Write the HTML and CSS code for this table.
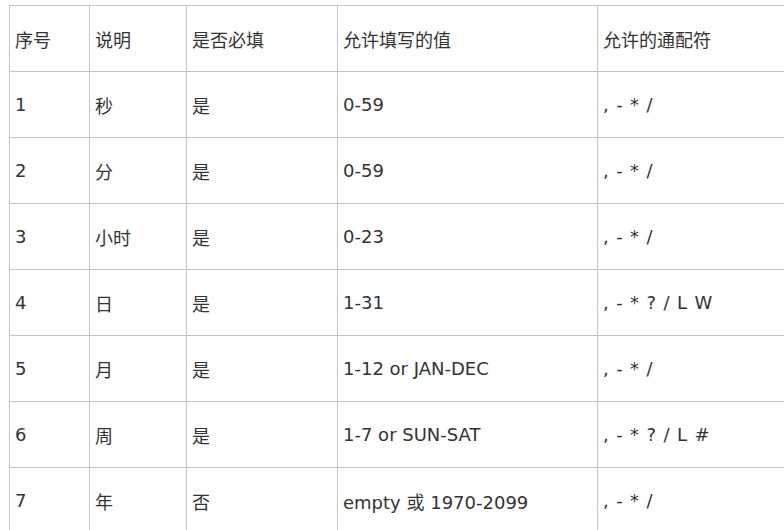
FILE: index.html
```html
<!DOCTYPE html>
<html lang="zh-CN">
<head>
<meta charset="utf-8">
<title>Cron 表达式字段</title>
<link rel="stylesheet" href="styles.css">
</head>
<body>
<table class="cron-table">
  <colgroup>
    <col class="c1"><col class="c2"><col class="c3"><col class="c4"><col class="c5">
  </colgroup>
  <tr><td>序号</td><td>说明</td><td>是否必填</td><td>允许填写的值</td><td>允许的通配符</td></tr>
  <tr><td>1</td><td>秒</td><td>是</td><td>0-59</td><td class="wild">, - * /</td></tr>
  <tr><td>2</td><td>分</td><td>是</td><td>0-59</td><td class="wild">, - * /</td></tr>
  <tr><td>3</td><td>小时</td><td>是</td><td>0-23</td><td class="wild">, - * /</td></tr>
  <tr><td>4</td><td>日</td><td>是</td><td>1-31</td><td class="wild">, - * ? / L W</td></tr>
  <tr><td>5</td><td>月</td><td>是</td><td>1-12 or JAN-DEC</td><td class="wild">, - * /</td></tr>
  <tr><td>6</td><td>周</td><td>是</td><td>1-7 or SUN-SAT</td><td class="wild">, - * ? / L #</td></tr>
  <tr><td>7</td><td>年</td><td>否</td><td>empty 或 1970-2099</td><td class="wild">, - * /</td></tr>
</table>
</body>
</html>
```
FILE: styles.css
```css
html, body {
  margin: 0;
  padding: 0;
  overflow: hidden;
  background: #fff;
}
body {
  padding: 5px 0 0 9px;
  font-family: "DejaVu Sans", "Noto Sans CJK SC", sans-serif;
  font-size: 18px;
  color: #333;
}
.cron-table {
  border-collapse: collapse;
  table-layout: fixed;
  width: 819px;
}
.c1 { width: 80px; }
.c2 { width: 97px; }
.c3 { width: 151px; }
.c4 { width: 260px; }
.c5 { width: 231px; }
.cron-table td {
  border: 1px solid #c4c4c4;
  height: 66px;
  padding: 0 5px;
  vertical-align: middle;
  white-space: nowrap;
  box-sizing: border-box;
}
.cron-table td.wild {
  word-spacing: 1.7px;
}
```
